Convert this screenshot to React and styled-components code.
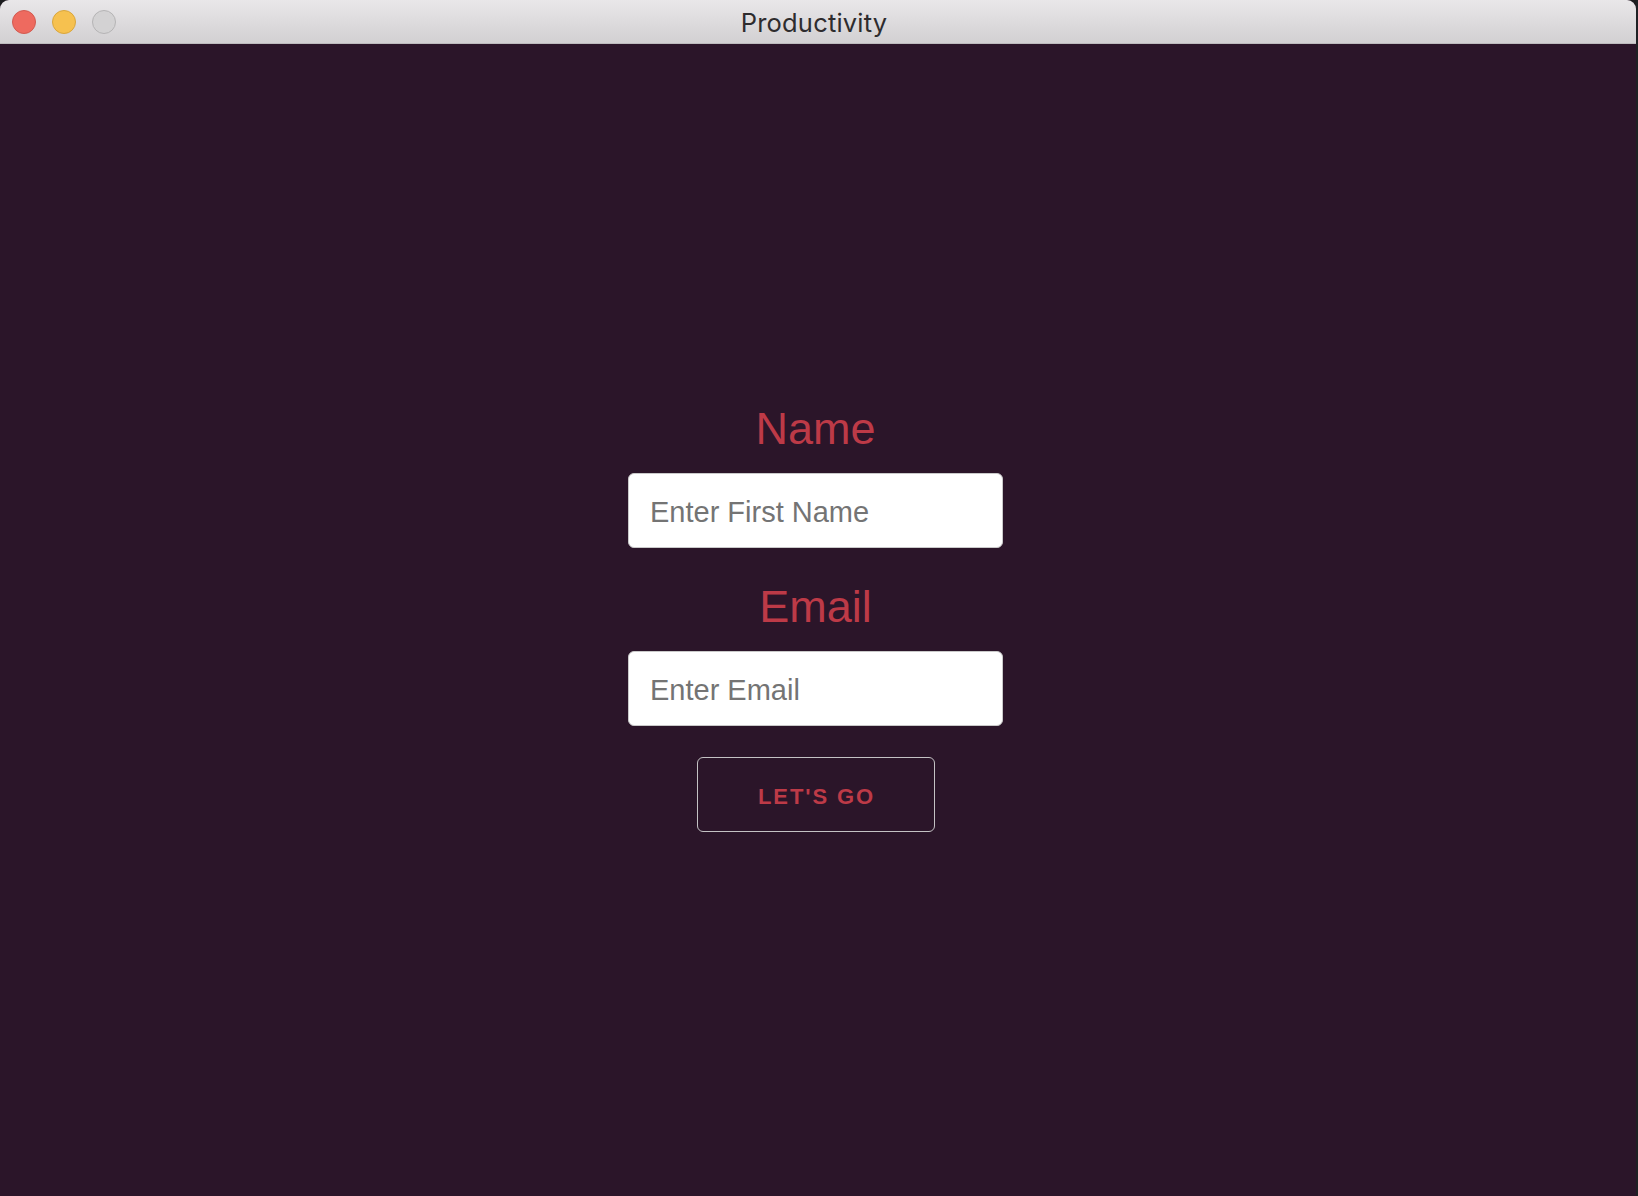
import React from "react";
import styled, { createGlobalStyle } from "styled-components";

const Global = createGlobalStyle`
  html, body { margin: 0; padding: 0; background: #1c1a1c; }
  body { font-family: "Liberation Sans", Arial, sans-serif; }
  * { box-sizing: border-box; }
`;

const Screen = styled.div`
  display: flex;
  width: 1638px;
  height: 1196px;
  overflow: hidden;
  background: #1c1d1f;
`;

const Window = styled.div`
  width: 1636px;
  height: 1196px;
  display: flex;
  flex-direction: column;
  border-radius: 9px 9px 0 0;
  overflow: hidden;
  background: #2b1529;
`;

const TitleBar = styled.div`
  height: 44px;
  flex: none;
  display: grid;
  grid-template-columns: 1fr auto 1fr;
  align-items: center;
  background: linear-gradient(#e9e7e9, #d2d0d2);
  border-bottom: 1px solid #bdbbbd;
`;

const Lights = styled.div`
  display: flex;
  gap: 16px;
  padding-left: 12px;
  padding-top: 1px;
`;

const Light = styled.span`
  width: 24px;
  height: 24px;
  border-radius: 50%;
  background: ${(p) => p.$fill};
  border: 1px solid ${(p) => p.$edge};
`;

const Title = styled.div`
  font-family: "Inter", "Noto Sans", sans-serif;
  font-size: 25.5px;
  color: #2e2c2e;
  letter-spacing: 0.2px;
  padding-top: 1px;
  margin-right: 8px;
`;

const Content = styled.main`
  flex: 1;
  display: flex;
  flex-direction: column;
  align-items: center;
  justify-content: center;
  padding: 2px 5px 4px 0;
`;

const Field = styled.div`
  display: flex;
  flex-direction: column;
  align-items: center;
  gap: 22px;
  margin-top: ${(p) => p.$top || 0}px;
`;

const Label = styled.label`
  font-size: 45px;
  line-height: 1;
  color: #bd3a47;
`;

const Input = styled.input`
  width: 375px;
  height: 75px;
  border: 1.5px solid #c9c9c9;
  border-radius: 6px;
  background: #fff;
  padding: 4px 0 0 21px;
  font-family: "Liberation Sans", Arial, sans-serif;
  font-size: 29px;
  color: #333;
  outline: none;
  &::placeholder { color: #747474; }
`;

const Button = styled.button`
  margin-top: 31px;
  width: 238px;
  height: 75px;
  background: transparent;
  border: 1.5px solid #c4c2c4;
  border-radius: 6px;
  color: #bd3a47;
  font-family: "Liberation Sans", Arial, sans-serif;
  font-weight: 700;
  font-size: 22px;
  letter-spacing: 1.9px;
  padding: 4px 0 0 2px;
  cursor: pointer;
`;

const Edge = styled.div`
  width: 2px;
  height: 1196px;
  background: #1e2124;
`;

export default function App() {
  return (
    <>
      <Global />
      <Screen>
        <Window>
          <TitleBar>
            <Lights>
              <Light $fill="#ee6a5f" $edge="#d25a50" />
              <Light $fill="#f6c14f" $edge="#d9a63d" />
              <Light $fill="#d3d2d3" $edge="#b5b4b5" />
            </Lights>
            <Title>Productivity</Title>
            <div />
          </TitleBar>
          <Content>
            <Field>
              <Label htmlFor="name">Name</Label>
              <Input id="name" placeholder="Enter First Name" />
            </Field>
            <Field $top={36}>
              <Label htmlFor="email">Email</Label>
              <Input id="email" placeholder="Enter Email" />
            </Field>
            <Button>LET'S GO</Button>
          </Content>
        </Window>
        <Edge />
      </Screen>
    </>
  );
}
